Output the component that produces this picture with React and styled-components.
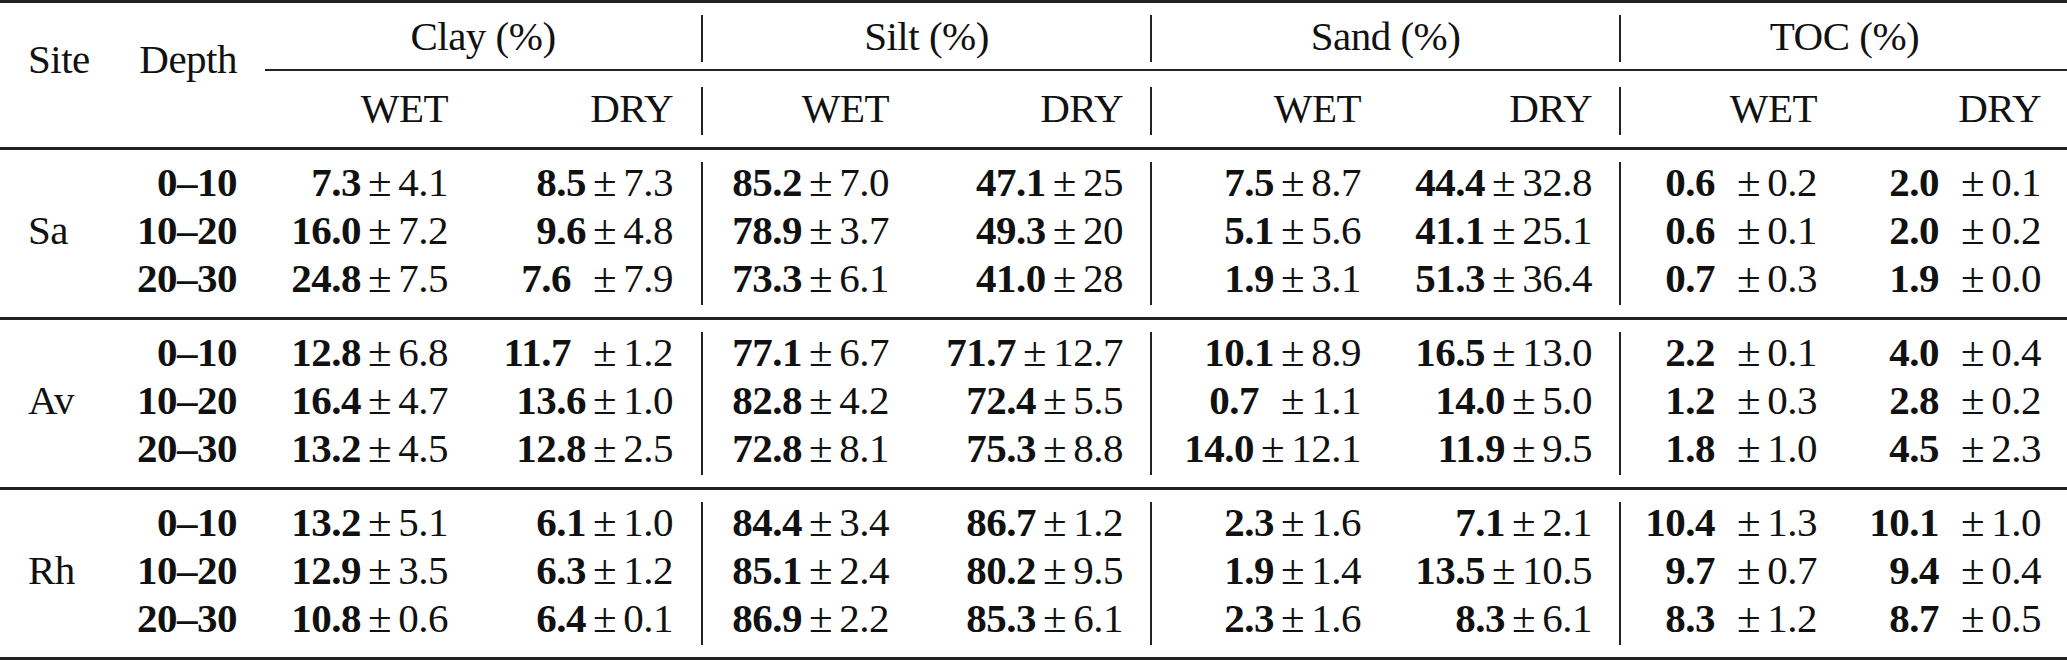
import styled, { createGlobalStyle } from 'styled-components';

const GlobalStyle = createGlobalStyle`
  body {
    margin: 0;
    background: #fff;
    color: #111;
    font-family: "Liberation Serif", "Times New Roman", serif;
    font-size: 41px;
    letter-spacing: -0.5px;
  }
`;

// grid tracks: site, depth, clay W/D, gap, sep, silt W/D, gap, sep, sand W/D, gap, sep, toc W/D, end
const COLS =
  '100px 137px 211px 225px 28px 2px 186px 234px 27px 2px 209px 231px 27px 2px 196px 224px 27px';
const VALUE_COLS = [3, 4, 7, 8, 11, 12, 15, 16];
const SEP_COLS = [6, 10, 14];
const GROUPS = [
  { label: 'Clay (%)', col: '3 / 6', trim: 28 },
  { label: 'Silt (%)', col: '7 / 10', trim: 0 },
  { label: 'Sand (%)', col: '11 / 14', trim: 0 },
  { label: 'TOC (%)', col: '15 / 18', trim: 0 },
];

const rows = [
  {
    site: 'Sa',
    depths: [
      ['0–10', [['7.3', '4.1'], ['8.5', '7.3'], ['85.2', '7.0'], ['47.1', '25'], ['7.5', '8.7'], ['44.4', '32.8'], ['0.6', '0.2', 1], ['2.0', '0.1', 1]]],
      ['10–20', [['16.0', '7.2'], ['9.6', '4.8'], ['78.9', '3.7'], ['49.3', '20'], ['5.1', '5.6'], ['41.1', '25.1'], ['0.6', '0.1', 1], ['2.0', '0.2', 1]]],
      ['20–30', [['24.8', '7.5'], ['7.6', '7.9', 1], ['73.3', '6.1'], ['41.0', '28'], ['1.9', '3.1'], ['51.3', '36.4'], ['0.7', '0.3', 1], ['1.9', '0.0', 1]]],
    ],
  },
  {
    site: 'Av',
    depths: [
      ['0–10', [['12.8', '6.8'], ['11.7', '1.2', 1], ['77.1', '6.7'], ['71.7', '12.7'], ['10.1', '8.9'], ['16.5', '13.0'], ['2.2', '0.1', 1], ['4.0', '0.4', 1]]],
      ['10–20', [['16.4', '4.7'], ['13.6', '1.0'], ['82.8', '4.2'], ['72.4', '5.5'], ['0.7', '1.1', 1], ['14.0', '5.0'], ['1.2', '0.3', 1], ['2.8', '0.2', 1]]],
      ['20–30', [['13.2', '4.5'], ['12.8', '2.5'], ['72.8', '8.1'], ['75.3', '8.8'], ['14.0', '12.1'], ['11.9', '9.5'], ['1.8', '1.0', 1], ['4.5', '2.3', 1]]],
    ],
  },
  {
    site: 'Rh',
    depths: [
      ['0–10', [['13.2', '5.1'], ['6.1', '1.0'], ['84.4', '3.4'], ['86.7', '1.2'], ['2.3', '1.6'], ['7.1', '2.1'], ['10.4', '1.3', 1], ['10.1', '1.0', 1]]],
      ['10–20', [['12.9', '3.5'], ['6.3', '1.2'], ['85.1', '2.4'], ['80.2', '9.5'], ['1.9', '1.4'], ['13.5', '10.5'], ['9.7', '0.7', 1], ['9.4', '0.4', 1]]],
      ['20–30', [['10.8', '0.6'], ['6.4', '0.1'], ['86.9', '2.2'], ['85.3', '6.1'], ['2.3', '1.6'], ['8.3', '6.1'], ['8.3', '1.2', 1], ['8.7', '0.5', 1]]],
    ],
  },
];

export default function App() {
  return (
    <>
      <GlobalStyle />
      <Table>
        <Header>
          <HeadLabel col={1} left>
            Site
          </HeadLabel>
          <HeadLabel col={2}>Depth</HeadLabel>
          {GROUPS.map((g) => (
            <GroupHead key={g.label} col={g.col} trim={g.trim}>
              {g.label}
            </GroupHead>
          ))}
          {SEP_COLS.map((c) => (
            <HeadSep key={'a' + c} col={c} row={1} />
          ))}
          <CmidRule />
          {VALUE_COLS.map((c, i) => (
            <SubHead key={c} col={c}>
              {i % 2 === 0 ? 'WET' : 'DRY'}
            </SubHead>
          ))}
          {SEP_COLS.map((c) => (
            <HeadSep key={'b' + c} col={c} row={3} />
          ))}
        </Header>

        {rows.map((block) => (
          <Block key={block.site}>
            <SiteCell>{block.site}</SiteCell>
            {block.depths.map(([depth, values], r) => (
              <Row key={depth} depth={depth} values={values} row={r + 1} />
            ))}
            {SEP_COLS.map((c) => (
              <BodySep key={c} col={c} />
            ))}
          </Block>
        ))}
      </Table>
    </>
  );
}

function Row({ depth, values, row }) {
  return (
    <>
      <DepthCell row={row}>{depth}</DepthCell>
      {values.map(([mean, err, wide], i) => (
        <ValueCell key={i} row={row} col={VALUE_COLS[i]}>
          <b>{mean}</b>
          <Pm wide={wide}>±</Pm>
          {err}
        </ValueCell>
      ))}
    </>
  );
}

const Table = styled.div`
  width: 2067px;
  border-top: 3px solid #222;
`;

const Header = styled.div`
  display: grid;
  grid-template-columns: ${COLS};
  grid-template-rows: 66px 2px 76px;
  border-bottom: 3px solid #222;
`;

const HeadLabel = styled.div`
  grid-column: ${(p) => p.col};
  grid-row: 1 / 4;
  align-self: start;
  justify-self: ${(p) => (p.left ? 'start' : 'end')};
  margin-top: 32px;
  padding-left: ${(p) => (p.left ? '28px' : '0')};
  line-height: 48px;
`;

const GroupHead = styled.div`
  grid-column: ${(p) => p.col};
  grid-row: 1;
  align-self: center;
  text-align: center;
  padding-left: ${(p) => p.trim}px;
  line-height: 48px;
`;

const CmidRule = styled.div`
  grid-column: 3 / -1;
  grid-row: 2;
  margin-left: 28px;
  background: #222;
`;

const SubHead = styled.div`
  grid-column: ${(p) => p.col};
  grid-row: 3;
  align-self: center;
  justify-self: end;
  line-height: 48px;
  padding-bottom: 3px;
`;

const HeadSep = styled.div`
  grid-column: ${(p) => p.col};
  grid-row: ${(p) => p.row};
  background: #222;
  margin: ${(p) => (p.row === 1 ? '12px 0 7px' : '16px 0 12px')};
`;

const Block = styled.div`
  display: grid;
  grid-template-columns: ${COLS};
  grid-template-rows: repeat(3, 48px);
  padding: 8px 0 15px;
  border-bottom: 3px solid #222;
  line-height: 48px;
`;

const SiteCell = styled.div`
  grid-column: 1;
  grid-row: 1 / 4;
  align-self: center;
  padding-left: 28px;
`;

const DepthCell = styled.div`
  grid-column: 2;
  grid-row: ${(p) => p.row};
  justify-self: end;
  font-weight: bold;
`;

const ValueCell = styled.div`
  grid-column: ${(p) => p.col};
  grid-row: ${(p) => p.row};
  justify-self: end;
  white-space: nowrap;

  b {
    font-weight: bold;
  }
`;

const Pm = styled.span`
  font-size: 1.05em;
  line-height: 1;
  margin: 0 7px 0 ${(p) => (p.wide ? '22px' : '7px')};
`;

const BodySep = styled.div`
  grid-column: ${(p) => p.col};
  grid-row: 1 / 4;
  background: #222;
  margin: 4px 0 -3px;
`;
